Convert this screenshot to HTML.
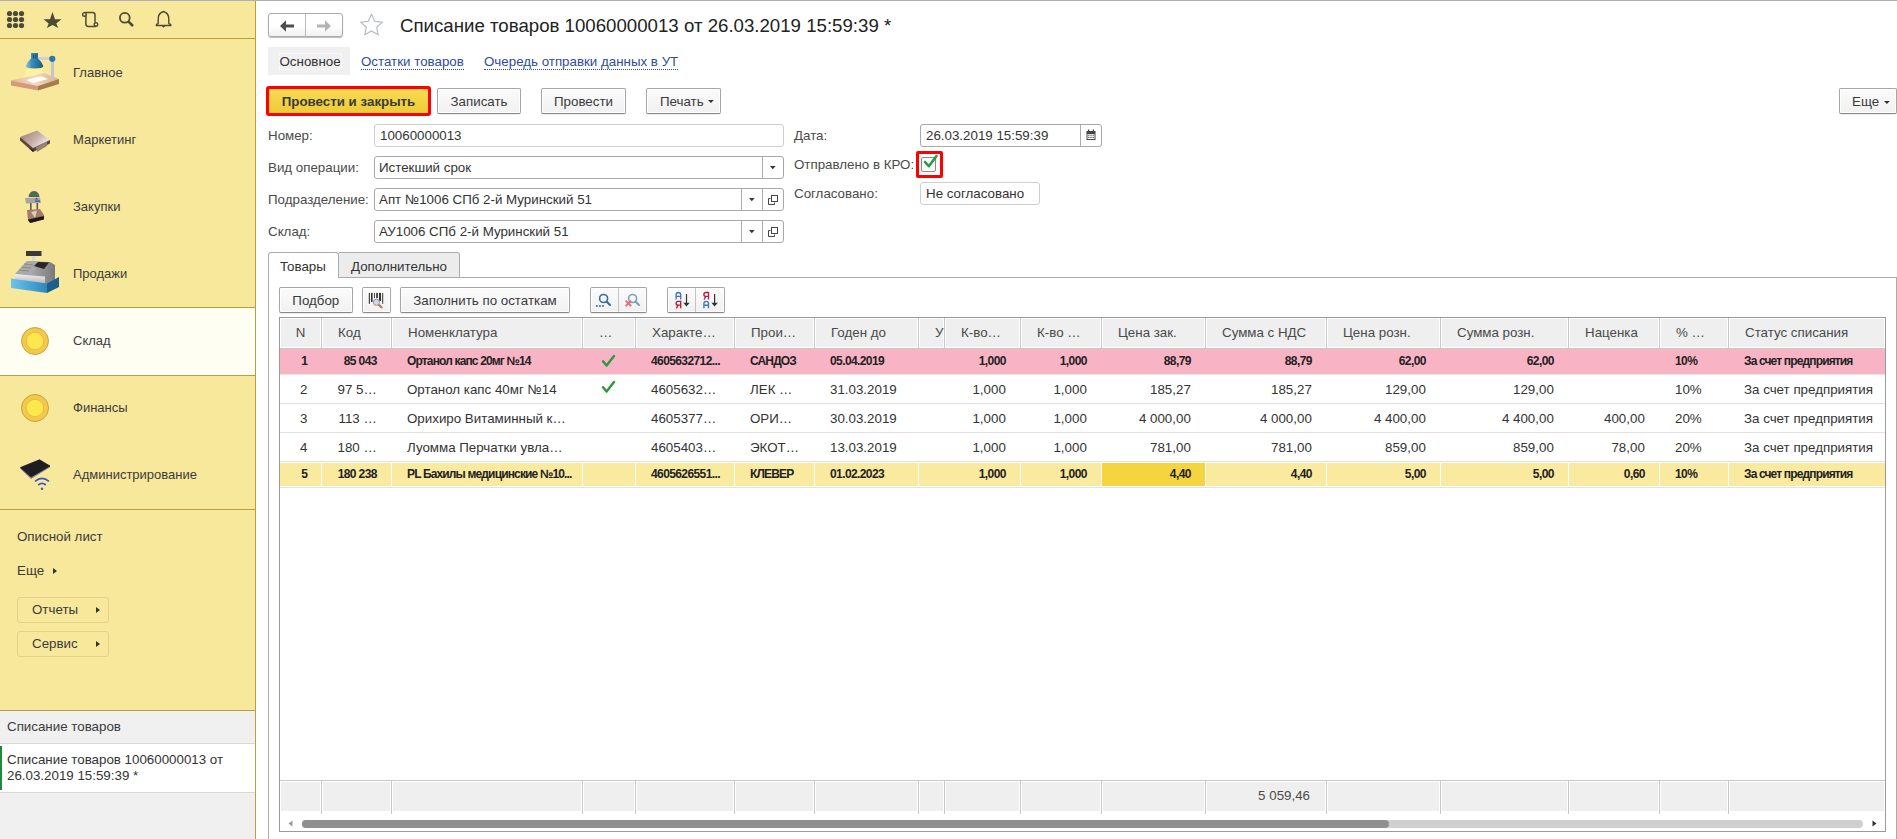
<!DOCTYPE html>
<html><head><meta charset="utf-8"><style>
html,body{margin:0;padding:0;}
body{width:1897px;height:839px;overflow:hidden;position:relative;background:#fff;font-family:"Liberation Sans", sans-serif;color:#333;}
div{box-sizing:border-box;}
.btn{position:absolute;box-sizing:border-box;border:1px solid #a6a6a6;border-bottom-color:#8a8a8a;border-radius:2px;background:linear-gradient(#fbfbfb,#f1f1f1);box-shadow:inset 0 0 0 1px #fff,0 1px 1px rgba(0,0,0,0.08);}
.fld{position:absolute;box-sizing:border-box;border:1px solid #a9a9a9;border-radius:3px;background:#fff;}
.lnk{color:#2f4c9c;border-bottom:1px dotted #2f4c9c;}
</style></head><body>

<div style="position:absolute;left:0px;top:0px;width:255px;height:839px;background:#f8e89c;"></div>
<div style="position:absolute;left:255px;top:0px;width:1px;height:839px;background:#b9a03c;"></div>
<div style="position:absolute;left:0px;top:38px;width:255px;height:1px;background:#b9a03c;"></div>
<svg style="position:absolute;left:0;top:0" width="255" height="38"><circle cx="9.5" cy="13.5" r="2.6" fill="#4d4a35"/><circle cx="9.5" cy="19.5" r="2.6" fill="#4d4a35"/><circle cx="9.5" cy="25.5" r="2.6" fill="#4d4a35"/><circle cx="15.5" cy="13.5" r="2.6" fill="#4d4a35"/><circle cx="15.5" cy="19.5" r="2.6" fill="#4d4a35"/><circle cx="15.5" cy="25.5" r="2.6" fill="#4d4a35"/><circle cx="21.5" cy="13.5" r="2.6" fill="#4d4a35"/><circle cx="21.5" cy="19.5" r="2.6" fill="#4d4a35"/><circle cx="21.5" cy="25.5" r="2.6" fill="#4d4a35"/><path d="M52.5 12 L55 19.3 L61.5 19.3 L56.3 23.5 L58.2 28 L52.5 25 L46.8 28 L48.7 23.5 L43.5 19.3 L50 19.3 Z" fill="#4d4a35"/><path d="M84.6 12.6 H92.6 Q95 12.6 95 15 V22.6 M85.9 15.2 V24 Q85.9 26.4 88.3 26.4 H96" fill="none" stroke="#4d4a35" stroke-width="1.5"/><circle cx="84.4" cy="14.4" r="1.8" fill="none" stroke="#4d4a35" stroke-width="1.4"/><circle cx="96" cy="24.5" r="1.8" fill="none" stroke="#4d4a35" stroke-width="1.4"/><circle cx="124.8" cy="17.8" r="4.9" fill="none" stroke="#4d4a35" stroke-width="1.8"/><path d="M128.3 21.3 L133 26" stroke="#4d4a35" stroke-width="2.6" stroke-linecap="butt"/><path d="M163.5 11.5 Q168.8 13 168.8 19 V23.5 Q171 24 171 25.5 H156.2 Q156.2 24 158.2 23.5 V19 Q158.2 13 163.5 11.5 Z" fill="none" stroke="#4d4a35" stroke-width="1.4" stroke-linejoin="round"/><path d="M161.8 26 L163.5 27.8 L165.2 26 Z" fill="#4d4a35"/></svg>
<div style="position:absolute;left:73px;top:66.00px;font-size:13px;line-height:13px;white-space:nowrap;color:#3b3b3b;">Главное</div>
<div style="position:absolute;left:73px;top:133.00px;font-size:13px;line-height:13px;white-space:nowrap;color:#3b3b3b;">Маркетинг</div>
<div style="position:absolute;left:73px;top:200.00px;font-size:13px;line-height:13px;white-space:nowrap;color:#3b3b3b;">Закупки</div>
<div style="position:absolute;left:73px;top:267.00px;font-size:13px;line-height:13px;white-space:nowrap;color:#3b3b3b;">Продажи</div>
<div style="position:absolute;left:0px;top:307px;width:255px;height:69px;background:#fffef3;border-top:1px solid #b9a03c;border-bottom:1px solid #b9a03c;"></div>
<div style="position:absolute;left:73px;top:334.00px;font-size:13px;line-height:13px;white-space:nowrap;color:#3b3b3b;">Склад</div>
<div style="position:absolute;left:73px;top:401.00px;font-size:13px;line-height:13px;white-space:nowrap;color:#3b3b3b;">Финансы</div>
<div style="position:absolute;left:73px;top:468.00px;font-size:13px;line-height:13px;white-space:nowrap;color:#3b3b3b;">Администрирование</div>
<div style="position:absolute;left:0px;top:509px;width:255px;height:1px;background:#b9a03c;"></div>
<svg style="position:absolute;left:0;top:0" width="255" height="510"><defs><linearGradient id="shade" x1="0" x2="1"><stop offset="0" stop-color="#8cc8e0"/><stop offset="0.35" stop-color="#3a8cb8"/><stop offset="1" stop-color="#175a85"/></linearGradient><linearGradient id="cone" x1="0" y1="0" x2="0" y2="1"><stop offset="0" stop-color="#fff38a"/><stop offset="1" stop-color="#fff6c0"/></linearGradient><linearGradient id="btop" x1="0" x2="1"><stop offset="0" stop-color="#e2b89a"/><stop offset="0.5" stop-color="#f0dcc0"/><stop offset="1" stop-color="#d8b088"/></linearGradient><linearGradient id="drawerF" x1="0" x2="1"><stop offset="0" stop-color="#6cc4ec"/><stop offset="1" stop-color="#2d88bc"/></linearGradient><linearGradient id="regF" x1="0" y1="0" x2="0" y2="1"><stop offset="0" stop-color="#f0f0f0"/><stop offset="1" stop-color="#a8a8a8"/></linearGradient><linearGradient id="regS" x1="0" x2="1"><stop offset="0" stop-color="#c8c8c8"/><stop offset="1" stop-color="#7a7a7a"/></linearGradient><linearGradient id="tray" x1="0" y1="0" x2="1" y2="0.6"><stop offset="0" stop-color="#9a7a6c"/><stop offset="0.6" stop-color="#c8b0a8"/><stop offset="1" stop-color="#f2ecec"/></linearGradient></defs><path d="M28 67 L41 67 L47 79 L22 80 Z" fill="url(#cone)" opacity="0.85"/><path d="M11 80.5 L44 73 L59 79 L38 86 Z" fill="url(#btop)"/><path d="M11 80.5 L38 86 L38 90.5 L11 85.5 Z" fill="#d39a7c"/><path d="M38 86 L59 79 L59 84 L38 90.5 Z" fill="#a87a52"/><path d="M26 80 L41 76.3 L48 79 L33 83 Z" fill="#ffffff" opacity="0.95"/><rect x="51" y="59" width="3" height="20" fill="#c4c4cc"/><rect x="38" y="57" width="13" height="3" fill="#d0d0d8"/><circle cx="52.3" cy="58.8" r="3.1" fill="#2a78a8"/><path d="M31 53 H38 V58.5 Q42 62 43.3 66 Q43.3 68.5 34.5 68.5 Q25.7 68.5 25.7 66 Q27 62 31 58.5 Z" fill="url(#shade)"/><rect x="33" y="54.5" width="1" height="4" fill="#1b4a6a"/><rect x="35.3" y="54.5" width="1" height="4" fill="#1b4a6a"/><path d="M20 137.5 L20 140.5 L33 152 L50 143.5 L50 140 Z" fill="#5e463a"/><path d="M36 147 L47 141.5 L47 146 L37 152 Z" fill="#9c8070"/><path d="M29 148 L33 152 L34 150 Z" fill="#2a2018"/><path d="M20 137 L37 130.5 L50 140 L33 148 Z" fill="url(#tray)"/><path d="M28.5 197 Q29 191.5 34 191 Q39 191.5 39.5 197 Z" fill="#5c5c5c"/><rect x="30" y="193.5" width="8" height="2" fill="#2a8a3c"/><path d="M25 198 L40 197.5 L41 203 L26 203.5 Z" fill="#a8a6a2"/><path d="M35 199.5 L36.5 197.5 L38 199.5 Z" fill="#2c48c0"/><rect x="35" y="200.5" width="5" height="1.2" fill="#2c48c0"/><rect x="30" y="203" width="1.6" height="9" fill="#5a5a5a"/><rect x="36.5" y="203" width="1.6" height="9" fill="#5a5a5a"/><path d="M27 210 L40 209 L44 215 L44 219 L31 223 L28 221 Z" fill="#a57c66"/><path d="M31 212 L37 210.5 L35 218 Z" fill="#e8e0dc" opacity="0.8"/><path d="M28 219.5 L44 216 L44 219.5 L30 223 Z" fill="#1e1a18"/><rect x="26" y="251" width="15.5" height="5" fill="#3a3a3a"/><rect x="32.3" y="256" width="3" height="5.5" fill="#d8d8d8"/><path d="M15 274 L27 261 L50 262 L55 265 L55 283 L45 286 L15 281 Z" fill="url(#regS)"/><path d="M15 274 L27 261 L40 261.5 L31 275.5 Z" fill="#a9a9a9"/><path d="M19 270 L29 271 M21.5 267 L31 268 M24 264 L33.5 265" stroke="#8a8a8a" stroke-width="1"/><path d="M15 274 L31 275.5 L45 276.5 L45 286 L15 281 Z" fill="url(#regF)"/><path d="M34 266 L38 262 L49 262.5 L44 269 Z" fill="#262626"/><path d="M11 278.5 L47 283.5 L47 293 L11 288 Z" fill="url(#drawerF)"/><path d="M47 283.5 L59 277 L59 287 L47 293 Z" fill="#1d5f8c"/><circle cx="35" cy="341" r="13.5" fill="#f3c84c" stroke="#b8982c" stroke-width="0.8"/><circle cx="35" cy="341" r="8.7" fill="#fde74e" stroke="#d8b030" stroke-width="0.6"/><circle cx="35" cy="408" r="13.5" fill="#f3c84c" stroke="#b8982c" stroke-width="0.8"/><circle cx="35" cy="408" r="8.7" fill="#fde74e" stroke="#d8b030" stroke-width="0.6"/><path d="M20.5 468.5 L39.5 460.3 L50 466.8 L31 478.5 Z" fill="#8a8a96" stroke="#8a8a96" stroke-width="1" stroke-linejoin="round"/><path d="M20.5 467.5 L39.5 459.8 L50 466 L31 477 Z" fill="#1e1d22" stroke="#1e1d22" stroke-width="0.8" stroke-linejoin="round"/><path d="M35 481.3 Q42 475.5 49 481.3" fill="none" stroke="#3a58c8" stroke-width="1.7"/><path d="M38.2 485 Q42 481.6 45.8 485" fill="none" stroke="#3a58c8" stroke-width="1.7"/><circle cx="42" cy="488.8" r="1.2" fill="#3a58c8"/></svg>
<div style="position:absolute;left:17px;top:529.72px;font-size:13.33px;line-height:13.33px;white-space:nowrap;color:#3b3b3b;">Описной лист</div>
<div style="position:absolute;left:17px;top:563.72px;font-size:13.33px;line-height:13.33px;white-space:nowrap;color:#3b3b3b;">Еще</div>
<svg style="position:absolute;left:52px;top:567px" width="6" height="8"><path d="M1 1 L5 4 L1 7 Z" fill="#333"/></svg>
<div style="position:absolute;left:17px;top:597px;width:92px;height:26px;border:1px solid #e3d28a;border-radius:3px;"></div>
<div style="position:absolute;left:32px;top:602.72px;font-size:13.33px;line-height:13.33px;white-space:nowrap;color:#3b3b3b;">Отчеты</div>
<svg style="position:absolute;left:95px;top:606px" width="6" height="8"><path d="M1 1 L5 4 L1 7 Z" fill="#333"/></svg>
<div style="position:absolute;left:17px;top:631px;width:92px;height:26px;border:1px solid #e3d28a;border-radius:3px;"></div>
<div style="position:absolute;left:32px;top:636.72px;font-size:13.33px;line-height:13.33px;white-space:nowrap;color:#3b3b3b;">Сервис</div>
<svg style="position:absolute;left:95px;top:640px" width="6" height="8"><path d="M1 1 L5 4 L1 7 Z" fill="#333"/></svg>
<div style="position:absolute;left:0px;top:710px;width:255px;height:129px;background:#f0f0f0;"></div>
<div style="position:absolute;left:0px;top:710px;width:255px;height:1px;background:#b9a03c;"></div>
<div style="position:absolute;left:7px;top:719.72px;font-size:13.33px;line-height:13.33px;white-space:nowrap;color:#3b3b3b;">Списание товаров</div>
<div style="position:absolute;left:0px;top:743px;width:255px;height:50px;background:#fff;border-top:1px solid #d8d8d8;border-bottom:1px solid #d8d8d8;"></div>
<div style="position:absolute;left:0px;top:746px;width:2px;height:44px;background:#1e8a3a;"></div>
<div style="position:absolute;left:7px;top:752.72px;font-size:13.33px;line-height:13.33px;white-space:nowrap;color:#333;">Списание товаров 10060000013 от</div>
<div style="position:absolute;left:7px;top:768.72px;font-size:13.33px;line-height:13.33px;white-space:nowrap;color:#333;">26.03.2019 15:59:39 *</div>
<div style="position:absolute;left:268px;top:13px;width:75px;height:24px;border:1px solid #ababab;border-radius:3px;background:linear-gradient(#ffffff 55%,#f1f1f1);box-shadow:0 1px 1px rgba(0,0,0,0.28);"></div>
<div style="position:absolute;left:305px;top:14px;width:1px;height:23px;background:#b8b8b8;"></div>
<svg style="position:absolute;left:278px;top:18px" width="60" height="16"><path d="M2 8 L8 2.2 V6.6 H16 V9.4 H8 V13.8 Z" fill="#4e4e4e"/><path d="M53 8 L47 2.2 V6.6 H39 V9.4 H47 V13.8 Z" fill="#b4b4b4"/></svg>
<svg style="position:absolute;left:358px;top:13px" width="26" height="25"><polygon points="13.50,1.30 16.67,8.23 24.25,9.11 18.64,14.27 20.14,21.74 13.50,18.00 6.86,21.74 8.36,14.27 2.75,9.11 10.33,8.23" fill="none" stroke="#b3b9bf" stroke-width="1.1" stroke-linejoin="miter"/></svg>
<div style="position:absolute;left:400px;top:16.70px;font-size:18.67px;line-height:18.67px;white-space:nowrap;color:#222;">Списание товаров 10060000013 от 26.03.2019 15:59:39 *</div>
<div style="position:absolute;left:268px;top:47px;width:82px;height:28px;background:#f0f0f0;"></div>
<div style="position:absolute;left:279px;top:53px;width:63px;height:17px;border:1px dotted #ffffff;"></div>
<div style="position:absolute;left:279.5px;top:54.72px;font-size:13.33px;line-height:13.33px;white-space:nowrap;color:#333;">Основное</div>
<div style="position:absolute;left:361px;top:54.72px;font-size:13.33px;line-height:13.33px;white-space:nowrap;"><span class="lnk">Остатки товаров</span></div>
<div style="position:absolute;left:484px;top:54.72px;font-size:13.33px;line-height:13.33px;white-space:nowrap;"><span class="lnk">Очередь отправки данных в УТ</span></div>
<div style="position:absolute;left:266px;top:86px;width:165px;height:30px;border:3px solid #ff0000;border-radius:3px;background:linear-gradient(#f9da52,#eecb38);"></div>
<div style="position:absolute;left:248.5px;width:200px;text-align:center;top:94.72px;font-size:13.33px;line-height:13.33px;white-space:nowrap;font-weight:bold;color:#3a3a3a;">Провести и закрыть</div>
<div class="btn" style="left:437px;top:88px;width:84px;height:26px;"></div>
<div style="position:absolute;left:379.0px;width:200px;text-align:center;top:94.72px;font-size:13.33px;line-height:13.33px;white-space:nowrap;color:#3a3a3a;">Записать</div>
<div class="btn" style="left:541px;top:88px;width:85px;height:26px;"></div>
<div style="position:absolute;left:483.5px;width:200px;text-align:center;top:94.72px;font-size:13.33px;line-height:13.33px;white-space:nowrap;color:#3a3a3a;">Провести</div>
<div class="btn" style="left:646px;top:88px;width:75px;height:26px;"></div>
<div style="position:absolute;left:660px;top:94.72px;font-size:13.33px;line-height:13.33px;white-space:nowrap;color:#3a3a3a;">Печать</div>
<svg style="position:absolute;left:708.2px;top:99.8px" width="7" height="4"><path d="M0 0 H5.8 L2.9 3.1 Z" fill="#333"/></svg>
<div class="btn" style="left:1839px;top:88px;width:58px;height:26px;"></div>
<div style="position:absolute;left:1852px;top:94.72px;font-size:13.33px;line-height:13.33px;white-space:nowrap;color:#3a3a3a;">Еще</div>
<svg style="position:absolute;left:1884.3px;top:100.6px" width="7" height="4"><path d="M0 0 H5.8 L2.9 3.1 Z" fill="#333"/></svg>
<div style="position:absolute;left:268px;top:128.72px;font-size:13.33px;line-height:13.33px;white-space:nowrap;color:#4a4a4a;">Номер:</div>
<div style="position:absolute;left:268px;top:160.72px;font-size:13.33px;line-height:13.33px;white-space:nowrap;color:#4a4a4a;">Вид операции:</div>
<div style="position:absolute;left:268px;top:192.72px;font-size:13.33px;line-height:13.33px;white-space:nowrap;color:#4a4a4a;">Подразделение:</div>
<div style="position:absolute;left:268px;top:224.72px;font-size:13.33px;line-height:13.33px;white-space:nowrap;color:#4a4a4a;">Склад:</div>
<div style="position:absolute;left:374px;top:124px;width:410px;height:23px;border:1px solid #cfcfcf;border-radius:3px;background:#fff;"></div>
<div style="position:absolute;left:380px;top:128.72px;font-size:13.33px;line-height:13.33px;white-space:nowrap;color:#333;">10060000013</div>
<div style="position:absolute;left:374px;top:156px;width:410px;height:23px;border:1px solid #a9a9a9;border-radius:3px;background:#fff;"></div>
<div style="position:absolute;left:762px;top:157px;width:1px;height:21px;background:#ababab;"></div>
<div style="position:absolute;left:379px;top:160.72px;font-size:13.33px;line-height:13.33px;white-space:nowrap;color:#333;">Истекший срок</div>
<svg style="position:absolute;left:769.7px;top:165.7px" width="8" height="5"><path d="M0 0 H5.6 L2.8 3.3 Z" fill="#333"/></svg>
<div style="position:absolute;left:374px;top:188px;width:410px;height:23px;border:1px solid #a9a9a9;border-radius:3px;background:#fff;"></div>
<div style="position:absolute;left:741px;top:189px;width:1px;height:21px;background:#ababab;"></div>
<div style="position:absolute;left:762px;top:189px;width:1px;height:21px;background:#ababab;"></div>
<div style="position:absolute;left:379px;top:192.72px;font-size:13.33px;line-height:13.33px;white-space:nowrap;color:#333;">Апт №1006 СПб 2-й Муринский 51</div>
<svg style="position:absolute;left:748.7px;top:197.7px" width="8" height="5"><path d="M0 0 H5.6 L2.8 3.3 Z" fill="#333"/></svg>
<svg style="position:absolute;left:767px;top:194px" width="12" height="12"><path d="M1.5 4.5 H3.5 M1.5 4.5 V10.5 H7.5 V8.5" fill="none" stroke="#444" stroke-width="1"/><rect x="4.5" y="1.5" width="6" height="6" fill="none" stroke="#444" stroke-width="1"/></svg>
<div style="position:absolute;left:374px;top:220px;width:410px;height:23px;border:1px solid #a9a9a9;border-radius:3px;background:#fff;"></div>
<div style="position:absolute;left:741px;top:221px;width:1px;height:21px;background:#ababab;"></div>
<div style="position:absolute;left:762px;top:221px;width:1px;height:21px;background:#ababab;"></div>
<div style="position:absolute;left:379px;top:224.72px;font-size:13.33px;line-height:13.33px;white-space:nowrap;color:#333;">АУ1006 СПб 2-й Муринский 51</div>
<svg style="position:absolute;left:748.7px;top:229.7px" width="8" height="5"><path d="M0 0 H5.6 L2.8 3.3 Z" fill="#333"/></svg>
<svg style="position:absolute;left:767px;top:226px" width="12" height="12"><path d="M1.5 4.5 H3.5 M1.5 4.5 V10.5 H7.5 V8.5" fill="none" stroke="#444" stroke-width="1"/><rect x="4.5" y="1.5" width="6" height="6" fill="none" stroke="#444" stroke-width="1"/></svg>
<div style="position:absolute;left:794px;top:128.72px;font-size:13.33px;line-height:13.33px;white-space:nowrap;color:#4a4a4a;">Дата:</div>
<div style="position:absolute;left:794px;top:157.72px;font-size:13.33px;line-height:13.33px;white-space:nowrap;color:#4a4a4a;">Отправлено в КРО:</div>
<div style="position:absolute;left:794px;top:186.72px;font-size:13.33px;line-height:13.33px;white-space:nowrap;color:#4a4a4a;">Согласовано:</div>
<div style="position:absolute;left:920px;top:124px;width:182px;height:23px;border:1px solid #a9a9a9;border-radius:3px;background:#fff;"></div>
<div style="position:absolute;left:1080px;top:125px;width:1px;height:21px;background:#ababab;"></div>
<div style="position:absolute;left:926px;top:128.72px;font-size:13.33px;line-height:13.33px;white-space:nowrap;color:#333;">26.03.2019 15:59:39</div>
<svg style="position:absolute;left:1086px;top:129px" width="10" height="12"><rect x="0.5" y="2" width="9" height="9" fill="#444"/><rect x="1.5" y="5" width="7" height="5" fill="#fff"/><rect x="2" y="0.5" width="1.2" height="2" fill="#444"/><rect x="6.8" y="0.5" width="1.2" height="2" fill="#444"/><rect x="2.2" y="5.6" width="1.2" height="1.2" fill="#444"/><rect x="4.4" y="5.6" width="1.2" height="1.2" fill="#444"/><rect x="6.6" y="5.6" width="1.2" height="1.2" fill="#444"/><rect x="2.2" y="7.8" width="1.2" height="1.2" fill="#444"/><rect x="4.4" y="7.8" width="1.2" height="1.2" fill="#444"/><rect x="6.6" y="7.8" width="1.2" height="1.2" fill="#444"/></svg>
<div style="position:absolute;left:916px;top:151px;width:27px;height:27px;border:3px solid #ff0000;border-radius:2px;"></div>
<div style="position:absolute;left:921px;top:157px;width:15px;height:15px;border:1px solid #8a8a8a;border-radius:2px;background:#fff;"></div>
<svg style="position:absolute;left:920px;top:152px" width="20" height="18"><path d="M5 10 L8.8 14.2 L16.5 4" fill="none" stroke="#2a9a40" stroke-width="2.6" stroke-linecap="round" stroke-linejoin="round"/></svg>
<div style="position:absolute;left:920px;top:182px;width:120px;height:23px;border:1px solid #cfcfcf;border-radius:3px;background:#fff;"></div>
<div style="position:absolute;left:926px;top:186.72px;font-size:13.33px;line-height:13.33px;white-space:nowrap;color:#333;">Не согласовано</div>
<div style="position:absolute;left:268px;top:277px;width:1629px;height:600px;border-left:1px solid #ababab;border-top:1px solid #ababab;border-right:1px solid #ababab;"></div>
<div style="position:absolute;left:268px;top:252px;width:71px;height:26px;border:1px solid #ababab;border-bottom:none;border-radius:3px 3px 0 0;background:#fff;"></div>
<div style="position:absolute;left:339px;top:252px;width:121px;height:26px;border:1px solid #ababab;border-left:none;border-radius:0 3px 0 0;background:#ececec;"></div>
<div style="position:absolute;left:280px;top:259.72px;font-size:13.33px;line-height:13.33px;white-space:nowrap;color:#333;">Товары</div>
<div style="position:absolute;left:351px;top:259.72px;font-size:13.33px;line-height:13.33px;white-space:nowrap;color:#333;">Дополнительно</div>
<div class="btn" style="left:279px;top:287px;width:74px;height:26px;"></div>
<div style="position:absolute;left:215.8px;width:200px;text-align:center;top:293.72px;font-size:13.33px;line-height:13.33px;white-space:nowrap;color:#3a3a3a;">Подбор</div>
<div class="btn" style="left:362px;top:287px;width:29px;height:26px;"></div>
<svg style="position:absolute;left:362px;top:287px" width="29" height="26"><rect x="6.8" y="5.9" width="1.1" height="10.9" fill="#333"/><rect x="9" y="5.9" width="1.6" height="9" fill="#333"/><rect x="12" y="5.9" width="0.9" height="5.2" fill="#333"/><rect x="14.2" y="5.9" width="1.7" height="5.2" fill="#333"/><rect x="17" y="5.9" width="2" height="8" fill="#333"/><rect x="20.2" y="5.9" width="1" height="10.9" fill="#333"/><path d="M16.6 17.6 L19.6 20.4" stroke="#b8805a" stroke-width="2.2" stroke-linecap="round"/><circle cx="14.4" cy="15.3" r="3.1" fill="#c4daf6" stroke="#b88a6a" stroke-width="1"/></svg>
<div class="btn" style="left:400px;top:287px;width:170px;height:26px;"></div>
<div style="position:absolute;left:385px;width:200px;text-align:center;top:293.72px;font-size:13.33px;line-height:13.33px;white-space:nowrap;color:#3a3a3a;">Заполнить по остаткам</div>
<div class="btn" style="left:590px;top:287px;width:57px;height:26px;"></div>
<div style="position:absolute;left:618px;top:288px;width:1px;height:24px;background:#c4c4c4;"></div>
<svg style="position:absolute;left:590px;top:287px" width="57" height="26"><circle cx="13.6" cy="11.5" r="4" fill="none" stroke="#3d6a9a" stroke-width="1.6"/><path d="M16.6 14.5 L20 17.9" stroke="#3d6a9a" stroke-width="2.1" stroke-linecap="round"/><rect x="6" y="18.1" width="1.7" height="1.7" fill="#3d6a9a"/><rect x="9.1" y="18.1" width="1.7" height="1.7" fill="#3d6a9a"/><rect x="12.2" y="18.1" width="1.7" height="1.7" fill="#3d6a9a"/><circle cx="42.6" cy="11.5" r="4" fill="none" stroke="#7d9ec2" stroke-width="1.6"/><path d="M45.6 14.5 L49 17.9" stroke="#7d9ec2" stroke-width="2.1" stroke-linecap="round"/><path d="M35.6 13.6 L41.2 19.2 M41.2 13.6 L35.6 19.2" stroke="#e8697f" stroke-width="1.9"/></svg>
<div class="btn" style="left:667px;top:287px;width:58px;height:26px;"></div>
<div style="position:absolute;left:695px;top:288px;width:1px;height:24px;background:#c4c4c4;"></div>
<svg style="position:absolute;left:667px;top:287px" width="60" height="26"><path d="M9.1 12.5 V7.8 Q9.1 5.5 11.399999999999999 5.5 Q13.7 5.5 13.7 7.8 V12.5 M9.1 9.4 H13.7" fill="none" stroke="#3a78b8" stroke-width="1.35"/><path d="M13.7 21.3 V14.3 H11.1 Q9.1 14.3 9.1 16.2 Q9.1 18.1 11.1 18.1 H13.7 M11.1 18.1 L9.299999999999999 21.3" fill="none" stroke="#b0203c" stroke-width="1.35"/><path d="M19.5 7 V16.5" stroke="#333" stroke-width="1.2"/><path d="M16.3 15.8 L19.5 19.6 L22.7 15.8 Z" fill="#333"/><path d="M41.5 12.5 V5.5 H38.9 Q36.9 5.5 36.9 7.4 Q36.9 9.3 38.9 9.3 H41.5 M38.9 9.3 L37.1 12.5" fill="none" stroke="#b0203c" stroke-width="1.35"/><path d="M36.9 21.3 V16.6 Q36.9 14.3 39.199999999999996 14.3 Q41.5 14.3 41.5 16.6 V21.3 M36.9 18.2 H41.5" fill="none" stroke="#3a78b8" stroke-width="1.35"/><path d="M47.6 7 V16.5" stroke="#333" stroke-width="1.2"/><path d="M44.4 15.8 L47.6 19.6 L50.8 15.8 Z" fill="#333"/></svg>
<div style="position:absolute;left:279px;top:317px;width:1607px;height:515px;border:1px solid #9a9a9a;background:#fff;"></div>
<div style="position:absolute;left:280px;top:318px;width:41px;height:30px;border:1px solid #fff;background:#efefef;"></div>
<div style="position:absolute;left:322px;top:318px;width:69px;height:30px;border:1px solid #fff;background:#efefef;"></div>
<div style="position:absolute;left:392px;top:318px;width:190px;height:30px;border:1px solid #fff;background:#efefef;"></div>
<div style="position:absolute;left:583px;top:318px;width:52px;height:30px;border:1px solid #fff;background:#efefef;"></div>
<div style="position:absolute;left:636px;top:318px;width:98px;height:30px;border:1px solid #fff;background:#efefef;"></div>
<div style="position:absolute;left:735px;top:318px;width:79px;height:30px;border:1px solid #fff;background:#efefef;"></div>
<div style="position:absolute;left:815px;top:318px;width:103px;height:30px;border:1px solid #fff;background:#efefef;"></div>
<div style="position:absolute;left:919px;top:318px;width:25px;height:30px;border:1px solid #fff;background:#efefef;"></div>
<div style="position:absolute;left:945px;top:318px;width:75px;height:30px;border:1px solid #fff;background:#efefef;"></div>
<div style="position:absolute;left:1021px;top:318px;width:80px;height:30px;border:1px solid #fff;background:#efefef;"></div>
<div style="position:absolute;left:1102px;top:318px;width:103px;height:30px;border:1px solid #fff;background:#efefef;"></div>
<div style="position:absolute;left:1206px;top:318px;width:120px;height:30px;border:1px solid #fff;background:#efefef;"></div>
<div style="position:absolute;left:1327px;top:318px;width:113px;height:30px;border:1px solid #fff;background:#efefef;"></div>
<div style="position:absolute;left:1441px;top:318px;width:127px;height:30px;border:1px solid #fff;background:#efefef;"></div>
<div style="position:absolute;left:1569px;top:318px;width:90px;height:30px;border:1px solid #fff;background:#efefef;"></div>
<div style="position:absolute;left:1660px;top:318px;width:68px;height:30px;border:1px solid #fff;background:#efefef;"></div>
<div style="position:absolute;left:1729px;top:318px;width:156px;height:30px;border:1px solid #fff;background:#efefef;"></div>
<div style="position:absolute;left:321px;top:318px;width:1px;height:30px;background:#c8c8c8;"></div>
<div style="position:absolute;left:391px;top:318px;width:1px;height:30px;background:#c8c8c8;"></div>
<div style="position:absolute;left:582px;top:318px;width:1px;height:30px;background:#c8c8c8;"></div>
<div style="position:absolute;left:635px;top:318px;width:1px;height:30px;background:#c8c8c8;"></div>
<div style="position:absolute;left:734px;top:318px;width:1px;height:30px;background:#c8c8c8;"></div>
<div style="position:absolute;left:814px;top:318px;width:1px;height:30px;background:#c8c8c8;"></div>
<div style="position:absolute;left:918px;top:318px;width:1px;height:30px;background:#c8c8c8;"></div>
<div style="position:absolute;left:944px;top:318px;width:1px;height:30px;background:#c8c8c8;"></div>
<div style="position:absolute;left:1020px;top:318px;width:1px;height:30px;background:#c8c8c8;"></div>
<div style="position:absolute;left:1101px;top:318px;width:1px;height:30px;background:#c8c8c8;"></div>
<div style="position:absolute;left:1205px;top:318px;width:1px;height:30px;background:#c8c8c8;"></div>
<div style="position:absolute;left:1326px;top:318px;width:1px;height:30px;background:#c8c8c8;"></div>
<div style="position:absolute;left:1440px;top:318px;width:1px;height:30px;background:#c8c8c8;"></div>
<div style="position:absolute;left:1568px;top:318px;width:1px;height:30px;background:#c8c8c8;"></div>
<div style="position:absolute;left:1659px;top:318px;width:1px;height:30px;background:#c8c8c8;"></div>
<div style="position:absolute;left:1728px;top:318px;width:1px;height:30px;background:#c8c8c8;"></div>
<div style="position:absolute;left:280px;top:348px;width:1605px;height:1px;background:#c8c8c8;"></div>
<div style="position:absolute;left:200.7px;width:200px;text-align:center;top:325.72px;font-size:13.33px;line-height:13.33px;white-space:nowrap;color:#4a4a4a;">N</div>
<div style="position:absolute;left:338px;top:325.72px;font-size:13.33px;line-height:13.33px;white-space:nowrap;color:#4a4a4a;">Код</div>
<div style="position:absolute;left:408px;top:325.72px;font-size:13.33px;line-height:13.33px;white-space:nowrap;color:#4a4a4a;">Номенклатура</div>
<div style="position:absolute;left:599px;top:325.72px;font-size:13.33px;line-height:13.33px;white-space:nowrap;color:#4a4a4a;">…</div>
<div style="position:absolute;left:652px;top:325.72px;font-size:13.33px;line-height:13.33px;white-space:nowrap;color:#4a4a4a;">Характе…</div>
<div style="position:absolute;left:751px;top:325.72px;font-size:13.33px;line-height:13.33px;white-space:nowrap;color:#4a4a4a;">Прои…</div>
<div style="position:absolute;left:831px;top:325.72px;font-size:13.33px;line-height:13.33px;white-space:nowrap;color:#4a4a4a;">Годен до</div>
<div style="position:absolute;left:919px;top:318px;width:25px;height:30px;overflow:hidden;">
<div style="position:absolute;left:16px;top:7.72px;font-size:13.33px;line-height:13.33px;white-space:nowrap;color:#4a4a4a;">У</div>
</div>
<div style="position:absolute;left:961px;top:325.72px;font-size:13.33px;line-height:13.33px;white-space:nowrap;color:#4a4a4a;">К-во…</div>
<div style="position:absolute;left:1037px;top:325.72px;font-size:13.33px;line-height:13.33px;white-space:nowrap;color:#4a4a4a;">К-во …</div>
<div style="position:absolute;left:1118px;top:325.72px;font-size:13.33px;line-height:13.33px;white-space:nowrap;color:#4a4a4a;">Цена зак.</div>
<div style="position:absolute;left:1222px;top:325.72px;font-size:13.33px;line-height:13.33px;white-space:nowrap;color:#4a4a4a;">Сумма с НДС</div>
<div style="position:absolute;left:1343px;top:325.72px;font-size:13.33px;line-height:13.33px;white-space:nowrap;color:#4a4a4a;">Цена розн.</div>
<div style="position:absolute;left:1457px;top:325.72px;font-size:13.33px;line-height:13.33px;white-space:nowrap;color:#4a4a4a;">Сумма розн.</div>
<div style="position:absolute;left:1585px;top:325.72px;font-size:13.33px;line-height:13.33px;white-space:nowrap;color:#4a4a4a;">Наценка</div>
<div style="position:absolute;left:1676px;top:325.72px;font-size:13.33px;line-height:13.33px;white-space:nowrap;color:#4a4a4a;">% …</div>
<div style="position:absolute;left:1745px;top:325.72px;font-size:13.33px;line-height:13.33px;white-space:nowrap;color:#4a4a4a;">Статус списания</div>
<div style="position:absolute;left:280px;top:349px;width:1605px;height:25px;background:#f8b4c5;"></div>
<div style="position:absolute;left:280px;top:374px;width:1605px;height:1px;background:#e6e6e6;"></div>
<div style="position:absolute;right:1589.7px;top:355.34px;font-size:12px;line-height:12px;white-space:nowrap;font-weight:bold;color:#222;letter-spacing:-0.6px;">1</div>
<div style="position:absolute;right:1520.2px;top:355.34px;font-size:12px;line-height:12px;white-space:nowrap;font-weight:bold;color:#222;letter-spacing:-0.6px;">85 043</div>
<div style="position:absolute;left:407px;top:355.34px;font-size:12px;line-height:12px;white-space:nowrap;font-weight:bold;color:#222;letter-spacing:-0.85px;">Ортанол капс 20мг №14</div>
<svg style="position:absolute;left:600px;top:354.3px" width="18" height="15"><path d="M3 7.3 L6.6 11.6 L14 2" fill="none" stroke="#2a9a40" stroke-width="2.4" stroke-linecap="round" stroke-linejoin="round"/></svg>
<div style="position:absolute;left:651px;top:355.34px;font-size:12px;line-height:12px;white-space:nowrap;font-weight:bold;color:#222;letter-spacing:-0.6px;">4605632712...</div>
<div style="position:absolute;left:750px;top:355.34px;font-size:12px;line-height:12px;white-space:nowrap;font-weight:bold;color:#222;letter-spacing:-0.85px;">САНДОЗ</div>
<div style="position:absolute;left:830px;top:355.34px;font-size:12px;line-height:12px;white-space:nowrap;font-weight:bold;color:#222;letter-spacing:-0.6px;">05.04.2019</div>
<div style="position:absolute;right:891.2px;top:355.34px;font-size:12px;line-height:12px;white-space:nowrap;font-weight:bold;color:#222;letter-spacing:-0.6px;">1,000</div>
<div style="position:absolute;right:810.2px;top:355.34px;font-size:12px;line-height:12px;white-space:nowrap;font-weight:bold;color:#222;letter-spacing:-0.6px;">1,000</div>
<div style="position:absolute;right:706.2px;top:355.34px;font-size:12px;line-height:12px;white-space:nowrap;font-weight:bold;color:#222;letter-spacing:-0.6px;">88,79</div>
<div style="position:absolute;right:585.2px;top:355.34px;font-size:12px;line-height:12px;white-space:nowrap;font-weight:bold;color:#222;letter-spacing:-0.6px;">88,79</div>
<div style="position:absolute;right:471.20000000000005px;top:355.34px;font-size:12px;line-height:12px;white-space:nowrap;font-weight:bold;color:#222;letter-spacing:-0.6px;">62,00</div>
<div style="position:absolute;right:343.20000000000005px;top:355.34px;font-size:12px;line-height:12px;white-space:nowrap;font-weight:bold;color:#222;letter-spacing:-0.6px;">62,00</div>
<div style="position:absolute;left:1675px;top:355.34px;font-size:12px;line-height:12px;white-space:nowrap;font-weight:bold;color:#222;letter-spacing:-0.6px;">10%</div>
<div style="position:absolute;left:1744px;top:355.34px;font-size:12px;line-height:12px;white-space:nowrap;font-weight:bold;color:#222;letter-spacing:-0.85px;">За счет предприятия</div>
<div style="position:absolute;left:280px;top:375px;width:1605px;height:28px;background:#ffffff;"></div>
<div style="position:absolute;left:280px;top:403px;width:1605px;height:1px;background:#e2e2e2;"></div>
<div style="position:absolute;right:1589.7px;top:382.72px;font-size:13.33px;line-height:13.33px;white-space:nowrap;color:#333;">2</div>
<div style="position:absolute;right:1520.2px;top:382.72px;font-size:13.33px;line-height:13.33px;white-space:nowrap;color:#333;">97 5…</div>
<div style="position:absolute;left:407px;top:382.72px;font-size:13.33px;line-height:13.33px;white-space:nowrap;color:#333;">Ортанол капс 40мг №14</div>
<svg style="position:absolute;left:600px;top:380px" width="18" height="15"><path d="M3 7.3 L6.6 11.6 L14 2" fill="none" stroke="#2a9a40" stroke-width="2.4" stroke-linecap="round" stroke-linejoin="round"/></svg>
<div style="position:absolute;left:651px;top:382.72px;font-size:13.33px;line-height:13.33px;white-space:nowrap;color:#333;">4605632…</div>
<div style="position:absolute;left:750px;top:382.72px;font-size:13.33px;line-height:13.33px;white-space:nowrap;color:#333;">ЛЕК …</div>
<div style="position:absolute;left:830px;top:382.72px;font-size:13.33px;line-height:13.33px;white-space:nowrap;color:#333;">31.03.2019</div>
<div style="position:absolute;right:891.2px;top:382.72px;font-size:13.33px;line-height:13.33px;white-space:nowrap;color:#333;">1,000</div>
<div style="position:absolute;right:810.2px;top:382.72px;font-size:13.33px;line-height:13.33px;white-space:nowrap;color:#333;">1,000</div>
<div style="position:absolute;right:706.2px;top:382.72px;font-size:13.33px;line-height:13.33px;white-space:nowrap;color:#333;">185,27</div>
<div style="position:absolute;right:585.2px;top:382.72px;font-size:13.33px;line-height:13.33px;white-space:nowrap;color:#333;">185,27</div>
<div style="position:absolute;right:471.20000000000005px;top:382.72px;font-size:13.33px;line-height:13.33px;white-space:nowrap;color:#333;">129,00</div>
<div style="position:absolute;right:343.20000000000005px;top:382.72px;font-size:13.33px;line-height:13.33px;white-space:nowrap;color:#333;">129,00</div>
<div style="position:absolute;left:1675px;top:382.72px;font-size:13.33px;line-height:13.33px;white-space:nowrap;color:#333;">10%</div>
<div style="position:absolute;left:1744px;top:382.72px;font-size:13.33px;line-height:13.33px;white-space:nowrap;color:#333;">За счет предприятия</div>
<div style="position:absolute;left:280px;top:404px;width:1605px;height:28px;background:#ffffff;"></div>
<div style="position:absolute;left:280px;top:432px;width:1605px;height:1px;background:#e2e2e2;"></div>
<div style="position:absolute;right:1589.7px;top:411.72px;font-size:13.33px;line-height:13.33px;white-space:nowrap;color:#333;">3</div>
<div style="position:absolute;right:1520.2px;top:411.72px;font-size:13.33px;line-height:13.33px;white-space:nowrap;color:#333;">113 …</div>
<div style="position:absolute;left:407px;top:411.72px;font-size:13.33px;line-height:13.33px;white-space:nowrap;color:#333;">Орихиро Витаминный к…</div>
<div style="position:absolute;left:651px;top:411.72px;font-size:13.33px;line-height:13.33px;white-space:nowrap;color:#333;">4605377…</div>
<div style="position:absolute;left:750px;top:411.72px;font-size:13.33px;line-height:13.33px;white-space:nowrap;color:#333;">ОРИ…</div>
<div style="position:absolute;left:830px;top:411.72px;font-size:13.33px;line-height:13.33px;white-space:nowrap;color:#333;">30.03.2019</div>
<div style="position:absolute;right:891.2px;top:411.72px;font-size:13.33px;line-height:13.33px;white-space:nowrap;color:#333;">1,000</div>
<div style="position:absolute;right:810.2px;top:411.72px;font-size:13.33px;line-height:13.33px;white-space:nowrap;color:#333;">1,000</div>
<div style="position:absolute;right:706.2px;top:411.72px;font-size:13.33px;line-height:13.33px;white-space:nowrap;color:#333;">4 000,00</div>
<div style="position:absolute;right:585.2px;top:411.72px;font-size:13.33px;line-height:13.33px;white-space:nowrap;color:#333;">4 000,00</div>
<div style="position:absolute;right:471.20000000000005px;top:411.72px;font-size:13.33px;line-height:13.33px;white-space:nowrap;color:#333;">4 400,00</div>
<div style="position:absolute;right:343.20000000000005px;top:411.72px;font-size:13.33px;line-height:13.33px;white-space:nowrap;color:#333;">4 400,00</div>
<div style="position:absolute;right:252.20000000000005px;top:411.72px;font-size:13.33px;line-height:13.33px;white-space:nowrap;color:#333;">400,00</div>
<div style="position:absolute;left:1675px;top:411.72px;font-size:13.33px;line-height:13.33px;white-space:nowrap;color:#333;">20%</div>
<div style="position:absolute;left:1744px;top:411.72px;font-size:13.33px;line-height:13.33px;white-space:nowrap;color:#333;">За счет предприятия</div>
<div style="position:absolute;left:280px;top:433px;width:1605px;height:28px;background:#ffffff;"></div>
<div style="position:absolute;left:280px;top:461px;width:1605px;height:1px;background:#e2e2e2;"></div>
<div style="position:absolute;right:1589.7px;top:440.72px;font-size:13.33px;line-height:13.33px;white-space:nowrap;color:#333;">4</div>
<div style="position:absolute;right:1520.2px;top:440.72px;font-size:13.33px;line-height:13.33px;white-space:nowrap;color:#333;">180 …</div>
<div style="position:absolute;left:407px;top:440.72px;font-size:13.33px;line-height:13.33px;white-space:nowrap;color:#333;">Луомма Перчатки увла…</div>
<div style="position:absolute;left:651px;top:440.72px;font-size:13.33px;line-height:13.33px;white-space:nowrap;color:#333;">4605403…</div>
<div style="position:absolute;left:750px;top:440.72px;font-size:13.33px;line-height:13.33px;white-space:nowrap;color:#333;">ЭКОТ…</div>
<div style="position:absolute;left:830px;top:440.72px;font-size:13.33px;line-height:13.33px;white-space:nowrap;color:#333;">13.03.2019</div>
<div style="position:absolute;right:891.2px;top:440.72px;font-size:13.33px;line-height:13.33px;white-space:nowrap;color:#333;">1,000</div>
<div style="position:absolute;right:810.2px;top:440.72px;font-size:13.33px;line-height:13.33px;white-space:nowrap;color:#333;">1,000</div>
<div style="position:absolute;right:706.2px;top:440.72px;font-size:13.33px;line-height:13.33px;white-space:nowrap;color:#333;">781,00</div>
<div style="position:absolute;right:585.2px;top:440.72px;font-size:13.33px;line-height:13.33px;white-space:nowrap;color:#333;">781,00</div>
<div style="position:absolute;right:471.20000000000005px;top:440.72px;font-size:13.33px;line-height:13.33px;white-space:nowrap;color:#333;">859,00</div>
<div style="position:absolute;right:343.20000000000005px;top:440.72px;font-size:13.33px;line-height:13.33px;white-space:nowrap;color:#333;">859,00</div>
<div style="position:absolute;right:252.20000000000005px;top:440.72px;font-size:13.33px;line-height:13.33px;white-space:nowrap;color:#333;">78,00</div>
<div style="position:absolute;left:1675px;top:440.72px;font-size:13.33px;line-height:13.33px;white-space:nowrap;color:#333;">20%</div>
<div style="position:absolute;left:1744px;top:440.72px;font-size:13.33px;line-height:13.33px;white-space:nowrap;color:#333;">За счет предприятия</div>
<div style="position:absolute;left:280px;top:463px;width:41px;height:23px;background:#faeaa0;"></div>
<div style="position:absolute;left:322px;top:463px;width:69px;height:23px;background:#faeaa0;"></div>
<div style="position:absolute;left:392px;top:463px;width:190px;height:23px;background:#faeaa0;"></div>
<div style="position:absolute;left:583px;top:463px;width:52px;height:23px;background:#faeaa0;"></div>
<div style="position:absolute;left:636px;top:463px;width:98px;height:23px;background:#faeaa0;"></div>
<div style="position:absolute;left:735px;top:463px;width:79px;height:23px;background:#faeaa0;"></div>
<div style="position:absolute;left:815px;top:463px;width:103px;height:23px;background:#faeaa0;"></div>
<div style="position:absolute;left:919px;top:463px;width:101px;height:23px;background:#faeaa0;"></div>
<div style="position:absolute;left:1021px;top:463px;width:80px;height:23px;background:#faeaa0;"></div>
<div style="position:absolute;left:1102px;top:463px;width:103px;height:23px;background:#f5d53f;"></div>
<div style="position:absolute;left:1206px;top:463px;width:120px;height:23px;background:#faeaa0;"></div>
<div style="position:absolute;left:1327px;top:463px;width:113px;height:23px;background:#faeaa0;"></div>
<div style="position:absolute;left:1441px;top:463px;width:127px;height:23px;background:#faeaa0;"></div>
<div style="position:absolute;left:1569px;top:463px;width:90px;height:23px;background:#faeaa0;"></div>
<div style="position:absolute;left:1660px;top:463px;width:68px;height:23px;background:#faeaa0;"></div>
<div style="position:absolute;left:1729px;top:463px;width:156px;height:23px;background:#faeaa0;"></div>
<div style="position:absolute;left:280px;top:487px;width:1605px;height:1px;background:#e2e2e2;"></div>
<div style="position:absolute;right:1589.7px;top:468.34px;font-size:12px;line-height:12px;white-space:nowrap;font-weight:bold;color:#222;letter-spacing:-0.6px;">5</div>
<div style="position:absolute;right:1520.2px;top:468.34px;font-size:12px;line-height:12px;white-space:nowrap;font-weight:bold;color:#222;letter-spacing:-0.6px;">180 238</div>
<div style="position:absolute;left:407px;top:468.34px;font-size:12px;line-height:12px;white-space:nowrap;font-weight:bold;color:#222;letter-spacing:-0.85px;">PL Бахилы медицинские №10...</div>
<div style="position:absolute;left:651px;top:468.34px;font-size:12px;line-height:12px;white-space:nowrap;font-weight:bold;color:#222;letter-spacing:-0.6px;">4605626551...</div>
<div style="position:absolute;left:750px;top:468.34px;font-size:12px;line-height:12px;white-space:nowrap;font-weight:bold;color:#222;letter-spacing:-0.85px;">КЛЕВЕР</div>
<div style="position:absolute;left:830px;top:468.34px;font-size:12px;line-height:12px;white-space:nowrap;font-weight:bold;color:#222;letter-spacing:-0.6px;">01.02.2023</div>
<div style="position:absolute;right:891.2px;top:468.34px;font-size:12px;line-height:12px;white-space:nowrap;font-weight:bold;color:#222;letter-spacing:-0.6px;">1,000</div>
<div style="position:absolute;right:810.2px;top:468.34px;font-size:12px;line-height:12px;white-space:nowrap;font-weight:bold;color:#222;letter-spacing:-0.6px;">1,000</div>
<div style="position:absolute;right:706.2px;top:468.34px;font-size:12px;line-height:12px;white-space:nowrap;font-weight:bold;color:#222;letter-spacing:-0.6px;">4,40</div>
<div style="position:absolute;right:585.2px;top:468.34px;font-size:12px;line-height:12px;white-space:nowrap;font-weight:bold;color:#222;letter-spacing:-0.6px;">4,40</div>
<div style="position:absolute;right:471.20000000000005px;top:468.34px;font-size:12px;line-height:12px;white-space:nowrap;font-weight:bold;color:#222;letter-spacing:-0.6px;">5,00</div>
<div style="position:absolute;right:343.20000000000005px;top:468.34px;font-size:12px;line-height:12px;white-space:nowrap;font-weight:bold;color:#222;letter-spacing:-0.6px;">5,00</div>
<div style="position:absolute;right:252.20000000000005px;top:468.34px;font-size:12px;line-height:12px;white-space:nowrap;font-weight:bold;color:#222;letter-spacing:-0.6px;">0,60</div>
<div style="position:absolute;left:1675px;top:468.34px;font-size:12px;line-height:12px;white-space:nowrap;font-weight:bold;color:#222;letter-spacing:-0.6px;">10%</div>
<div style="position:absolute;left:1744px;top:468.34px;font-size:12px;line-height:12px;white-space:nowrap;font-weight:bold;color:#222;letter-spacing:-0.85px;">За счет предприятия</div>
<div style="position:absolute;left:280px;top:780px;width:1605px;height:1px;background:#c8c8c8;"></div>
<div style="position:absolute;left:280px;top:781px;width:41px;height:31px;border:1px solid #fff;background:#efefef;"></div>
<div style="position:absolute;left:322px;top:781px;width:69px;height:31px;border:1px solid #fff;background:#efefef;"></div>
<div style="position:absolute;left:392px;top:781px;width:190px;height:31px;border:1px solid #fff;background:#efefef;"></div>
<div style="position:absolute;left:583px;top:781px;width:52px;height:31px;border:1px solid #fff;background:#efefef;"></div>
<div style="position:absolute;left:636px;top:781px;width:98px;height:31px;border:1px solid #fff;background:#efefef;"></div>
<div style="position:absolute;left:735px;top:781px;width:79px;height:31px;border:1px solid #fff;background:#efefef;"></div>
<div style="position:absolute;left:815px;top:781px;width:103px;height:31px;border:1px solid #fff;background:#efefef;"></div>
<div style="position:absolute;left:919px;top:781px;width:25px;height:31px;border:1px solid #fff;background:#efefef;"></div>
<div style="position:absolute;left:945px;top:781px;width:75px;height:31px;border:1px solid #fff;background:#efefef;"></div>
<div style="position:absolute;left:1021px;top:781px;width:80px;height:31px;border:1px solid #fff;background:#efefef;"></div>
<div style="position:absolute;left:1102px;top:781px;width:103px;height:31px;border:1px solid #fff;background:#efefef;"></div>
<div style="position:absolute;left:1206px;top:781px;width:120px;height:31px;border:1px solid #fff;background:#efefef;"></div>
<div style="position:absolute;left:1327px;top:781px;width:113px;height:31px;border:1px solid #fff;background:#efefef;"></div>
<div style="position:absolute;left:1441px;top:781px;width:127px;height:31px;border:1px solid #fff;background:#efefef;"></div>
<div style="position:absolute;left:1569px;top:781px;width:90px;height:31px;border:1px solid #fff;background:#efefef;"></div>
<div style="position:absolute;left:1660px;top:781px;width:68px;height:31px;border:1px solid #fff;background:#efefef;"></div>
<div style="position:absolute;left:1729px;top:781px;width:156px;height:31px;border:1px solid #fff;background:#efefef;"></div>
<div style="position:absolute;left:321px;top:781px;width:1px;height:33px;background:#c8c8c8;"></div>
<div style="position:absolute;left:391px;top:781px;width:1px;height:33px;background:#c8c8c8;"></div>
<div style="position:absolute;left:582px;top:781px;width:1px;height:33px;background:#c8c8c8;"></div>
<div style="position:absolute;left:635px;top:781px;width:1px;height:33px;background:#c8c8c8;"></div>
<div style="position:absolute;left:734px;top:781px;width:1px;height:33px;background:#c8c8c8;"></div>
<div style="position:absolute;left:814px;top:781px;width:1px;height:33px;background:#c8c8c8;"></div>
<div style="position:absolute;left:918px;top:781px;width:1px;height:33px;background:#c8c8c8;"></div>
<div style="position:absolute;left:944px;top:781px;width:1px;height:33px;background:#c8c8c8;"></div>
<div style="position:absolute;left:1020px;top:781px;width:1px;height:33px;background:#c8c8c8;"></div>
<div style="position:absolute;left:1101px;top:781px;width:1px;height:33px;background:#c8c8c8;"></div>
<div style="position:absolute;left:1205px;top:781px;width:1px;height:33px;background:#c8c8c8;"></div>
<div style="position:absolute;left:1326px;top:781px;width:1px;height:33px;background:#c8c8c8;"></div>
<div style="position:absolute;left:1440px;top:781px;width:1px;height:33px;background:#c8c8c8;"></div>
<div style="position:absolute;left:1568px;top:781px;width:1px;height:33px;background:#c8c8c8;"></div>
<div style="position:absolute;left:1659px;top:781px;width:1px;height:33px;background:#c8c8c8;"></div>
<div style="position:absolute;left:1728px;top:781px;width:1px;height:33px;background:#c8c8c8;"></div>
<div style="position:absolute;right:587px;top:788.72px;font-size:13.33px;line-height:13.33px;white-space:nowrap;color:#4a4a4a;">5 059,46</div>
<svg style="position:absolute;left:286px;top:818px" width="10" height="12"><path d="M6.5 2.5 V8.5 L2.5 5.5 Z" fill="#9a9a9a"/></svg>
<div style="position:absolute;left:302px;top:820px;width:1561px;height:8px;background:#cfcfcf;border-radius:4px;"></div>
<div style="position:absolute;left:302px;top:820px;width:1087px;height:8px;background:#8f8f8f;border-radius:4px;"></div>
<svg style="position:absolute;left:1870px;top:818px" width="10" height="12"><path d="M2.5 2.5 V8.5 L6.5 5.5 Z" fill="#333"/></svg>
<div style="position:absolute;left:0px;top:0px;width:1897px;height:1px;background:#b0b0b0;"></div>
<div style="position:absolute;left:0px;top:0px;width:255px;height:1px;background:#b0b0bc;"></div>
</body></html>
